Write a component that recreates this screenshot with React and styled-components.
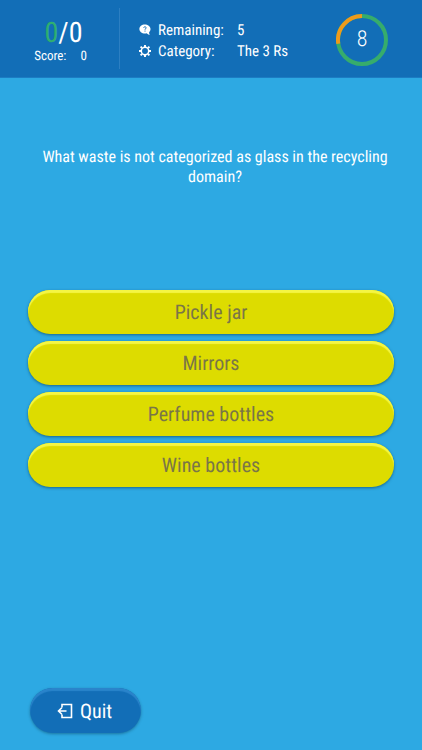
import React from "react";
import styled, { createGlobalStyle } from "styled-components";

const answers = ["Pickle jar", "Mirrors", "Perfume bottles", "Wine bottles"];

const App = () => {
  return (
    <Page>
      <GlobalStyle />
      <Header>
        <ScoreBox>
          <Tally>
            <Correct>0</Correct>/0
          </Tally>
          <Score>
            <span>Score:</span>
            <span>0</span>
          </Score>
        </ScoreBox>
        <Details>
          <QuestionIcon />
          <Term>Remaining:</Term>
          <Term>5</Term>
          <GearIcon />
          <Term>Category:</Term>
          <Term>The 3 Rs</Term>
        </Details>
        <Timer seconds={8} />
      </Header>
      <Main>
        <Question>
          What waste is not categorized as glass in the recycling domain?
        </Question>
        <Answers>
          {answers.map((answer) => (
            <Answer key={answer} type="button">
              {answer}
            </Answer>
          ))}
        </Answers>
      </Main>
      <Footer>
        <Quit type="button">
          <ExitIcon />
          Quit
        </Quit>
      </Footer>
    </Page>
  );
};

export default App;

const Timer = ({ seconds }) => (
  <TimerBox role="timer">
    <Ring viewBox="0 0 52 52" aria-hidden="true">
      <circle cx="26" cy="26" r="24" stroke="#36ac6c" />
      <path d="M2.3 29.8A24 24 0 0 1 26 2" stroke="#ee9a1c" />
    </Ring>
    <Seconds>{seconds}</Seconds>
  </TimerBox>
);

const QuestionIcon = () => (
  <SmallIcon viewBox="0 0 12 12" aria-hidden="true">
    <path
      fill="#fff"
      d="M5.8.6C2.8.6.4 2.5.4 5s2.4 4.5 5.4 4.5c.7 0 1.3-.1 1.900-.3.7.9 1.800 1.500 3.100 1.600-.6-.7-.8-1.500-.7-2.500.9-.9 1.400-2 1.400-3.300C11.500 2.500 8.800.6 5.800.6z"
    />
    <path
      d="M4.600 3.800c.2-1.300 2.700-1.200 2.600.1-.1.9-1.200.8-1.200 1.800M6 6.600v1"
      fill="none"
      stroke="#126eb7"
      strokeWidth="1"
    />
  </SmallIcon>
);

const GearIcon = () => (
  <SmallIcon viewBox="0 0 12 12" aria-hidden="true">
    <circle cx="6" cy="6" r="3.700" fill="none" stroke="#fff" strokeWidth="1.500" />
    <path
      d="M6 0v2M6 10v2M0 6h2M10 6h2M1.600 1.600l1.400 1.400M9 9l1.400 1.400M10.400 1.600L9 3M3 9l-1.400 1.400"
      stroke="#fff"
      strokeWidth="1.900"
    />
  </SmallIcon>
);

const ExitIcon = () => (
  <QuitIcon viewBox="0 0 16 16" aria-hidden="true">
    <path
      d="M5 4.500V1.500h9.500v13H5V11.500M9.500 8H1.500M4.800 4.700L1.500 8l3.300 3.300"
      fill="none"
      stroke="#fff"
      strokeWidth="1.600"
    />
  </QuitIcon>
);

const GlobalStyle = createGlobalStyle`
  * {
    box-sizing: border-box;
  }

  body {
    margin: 0;
    background-color: #2da9e3;
  }

  body,
  button {
    font-family: "Roboto Condensed", "Liberation Sans Narrow", Roboto, sans-serif;
    text-rendering: geometricPrecision;
  }
`;

const Page = styled.div`
  display: flex;
  flex-direction: column;
  min-height: 100vh;
  color: #fff;
`;

const Header = styled.header`
  display: flex;
  align-items: center;
  padding: 8px 33px 8px 0;
  background-color: #126eb7;
  border-bottom: 1px solid #1c7cc3;
`;

const ScoreBox = styled.div`
  display: flex;
  flex-direction: column;
  align-items: center;
  width: 120px;
  height: 61px;
  padding-top: 9px;
  border-right: 1px solid #2c7fc2;
`;

const Tally = styled.div`
  padding-left: 8px;
  font-size: 28px;
  line-height: 32px;
`;

const Correct = styled.span`
  color: #2fae71;
`;

const Score = styled.div`
  display: flex;
  gap: 14px;
  padding-left: 2px;
  font-size: 13px;
  line-height: 16px;
`;

const Details = styled.div`
  display: grid;
  flex: 1;
  grid-template-columns: 12px 72px 1fr;
  column-gap: 7px;
  align-items: center;
  padding: 4px 0 0 19px;
`;

const Term = styled.span`
  font-size: 15px;
  line-height: 21px;
`;

const SmallIcon = styled.svg`
  width: 12px;
  height: 12px;
`;

const TimerBox = styled.div`
  display: grid;
  place-items: center;
  width: 54px;
  padding-top: 3px;
`;

const Ring = styled.svg`
  grid-area: 1 / 1;
  width: 52px;
  height: 52px;
  fill: none;
  stroke-width: 4;
`;

const Seconds = styled.span`
  grid-area: 1 / 1;
  font-size: 22px;
  font-weight: 300;
  line-height: 24px;
`;

const Main = styled.main`
  flex: 1;
  padding: 69px 28px 24px;
`;

const Question = styled.h1`
  min-height: 143px;
  margin: 0;
  padding-left: 8px;
  font-size: 16px;
  font-weight: 400;
  line-height: 20px;
  text-align: center;
`;

const Answers = styled.div`
  display: flex;
  flex-direction: column;
  gap: 7px;
`;

const Answer = styled.button`
  height: 44px;
  padding: 0 12px;
  border: 0;
  border-radius: 22px;
  background-color: #dddc00;
  box-shadow: inset 0 3px 1px #f4f644, 0 1px 3px rgba(0, 40, 60, 0.5);
  color: #7a7647;
  font-size: 20px;
  cursor: pointer;
`;

const Footer = styled.footer`
  padding: 0 30px 17px;
`;

const Quit = styled.button`
  display: inline-flex;
  align-items: center;
  gap: 7px;
  height: 45px;
  padding: 0 29px 0 27px;
  border: 0;
  border-radius: 23px;
  background-color: #126eb7;
  box-shadow: inset 0 3px 1px #2a84cb, 0 1px 3px rgba(0, 40, 60, 0.4);
  color: #fff;
  font-size: 20px;
  cursor: pointer;
`;

const QuitIcon = styled.svg`
  width: 16px;
  height: 16px;
`;
